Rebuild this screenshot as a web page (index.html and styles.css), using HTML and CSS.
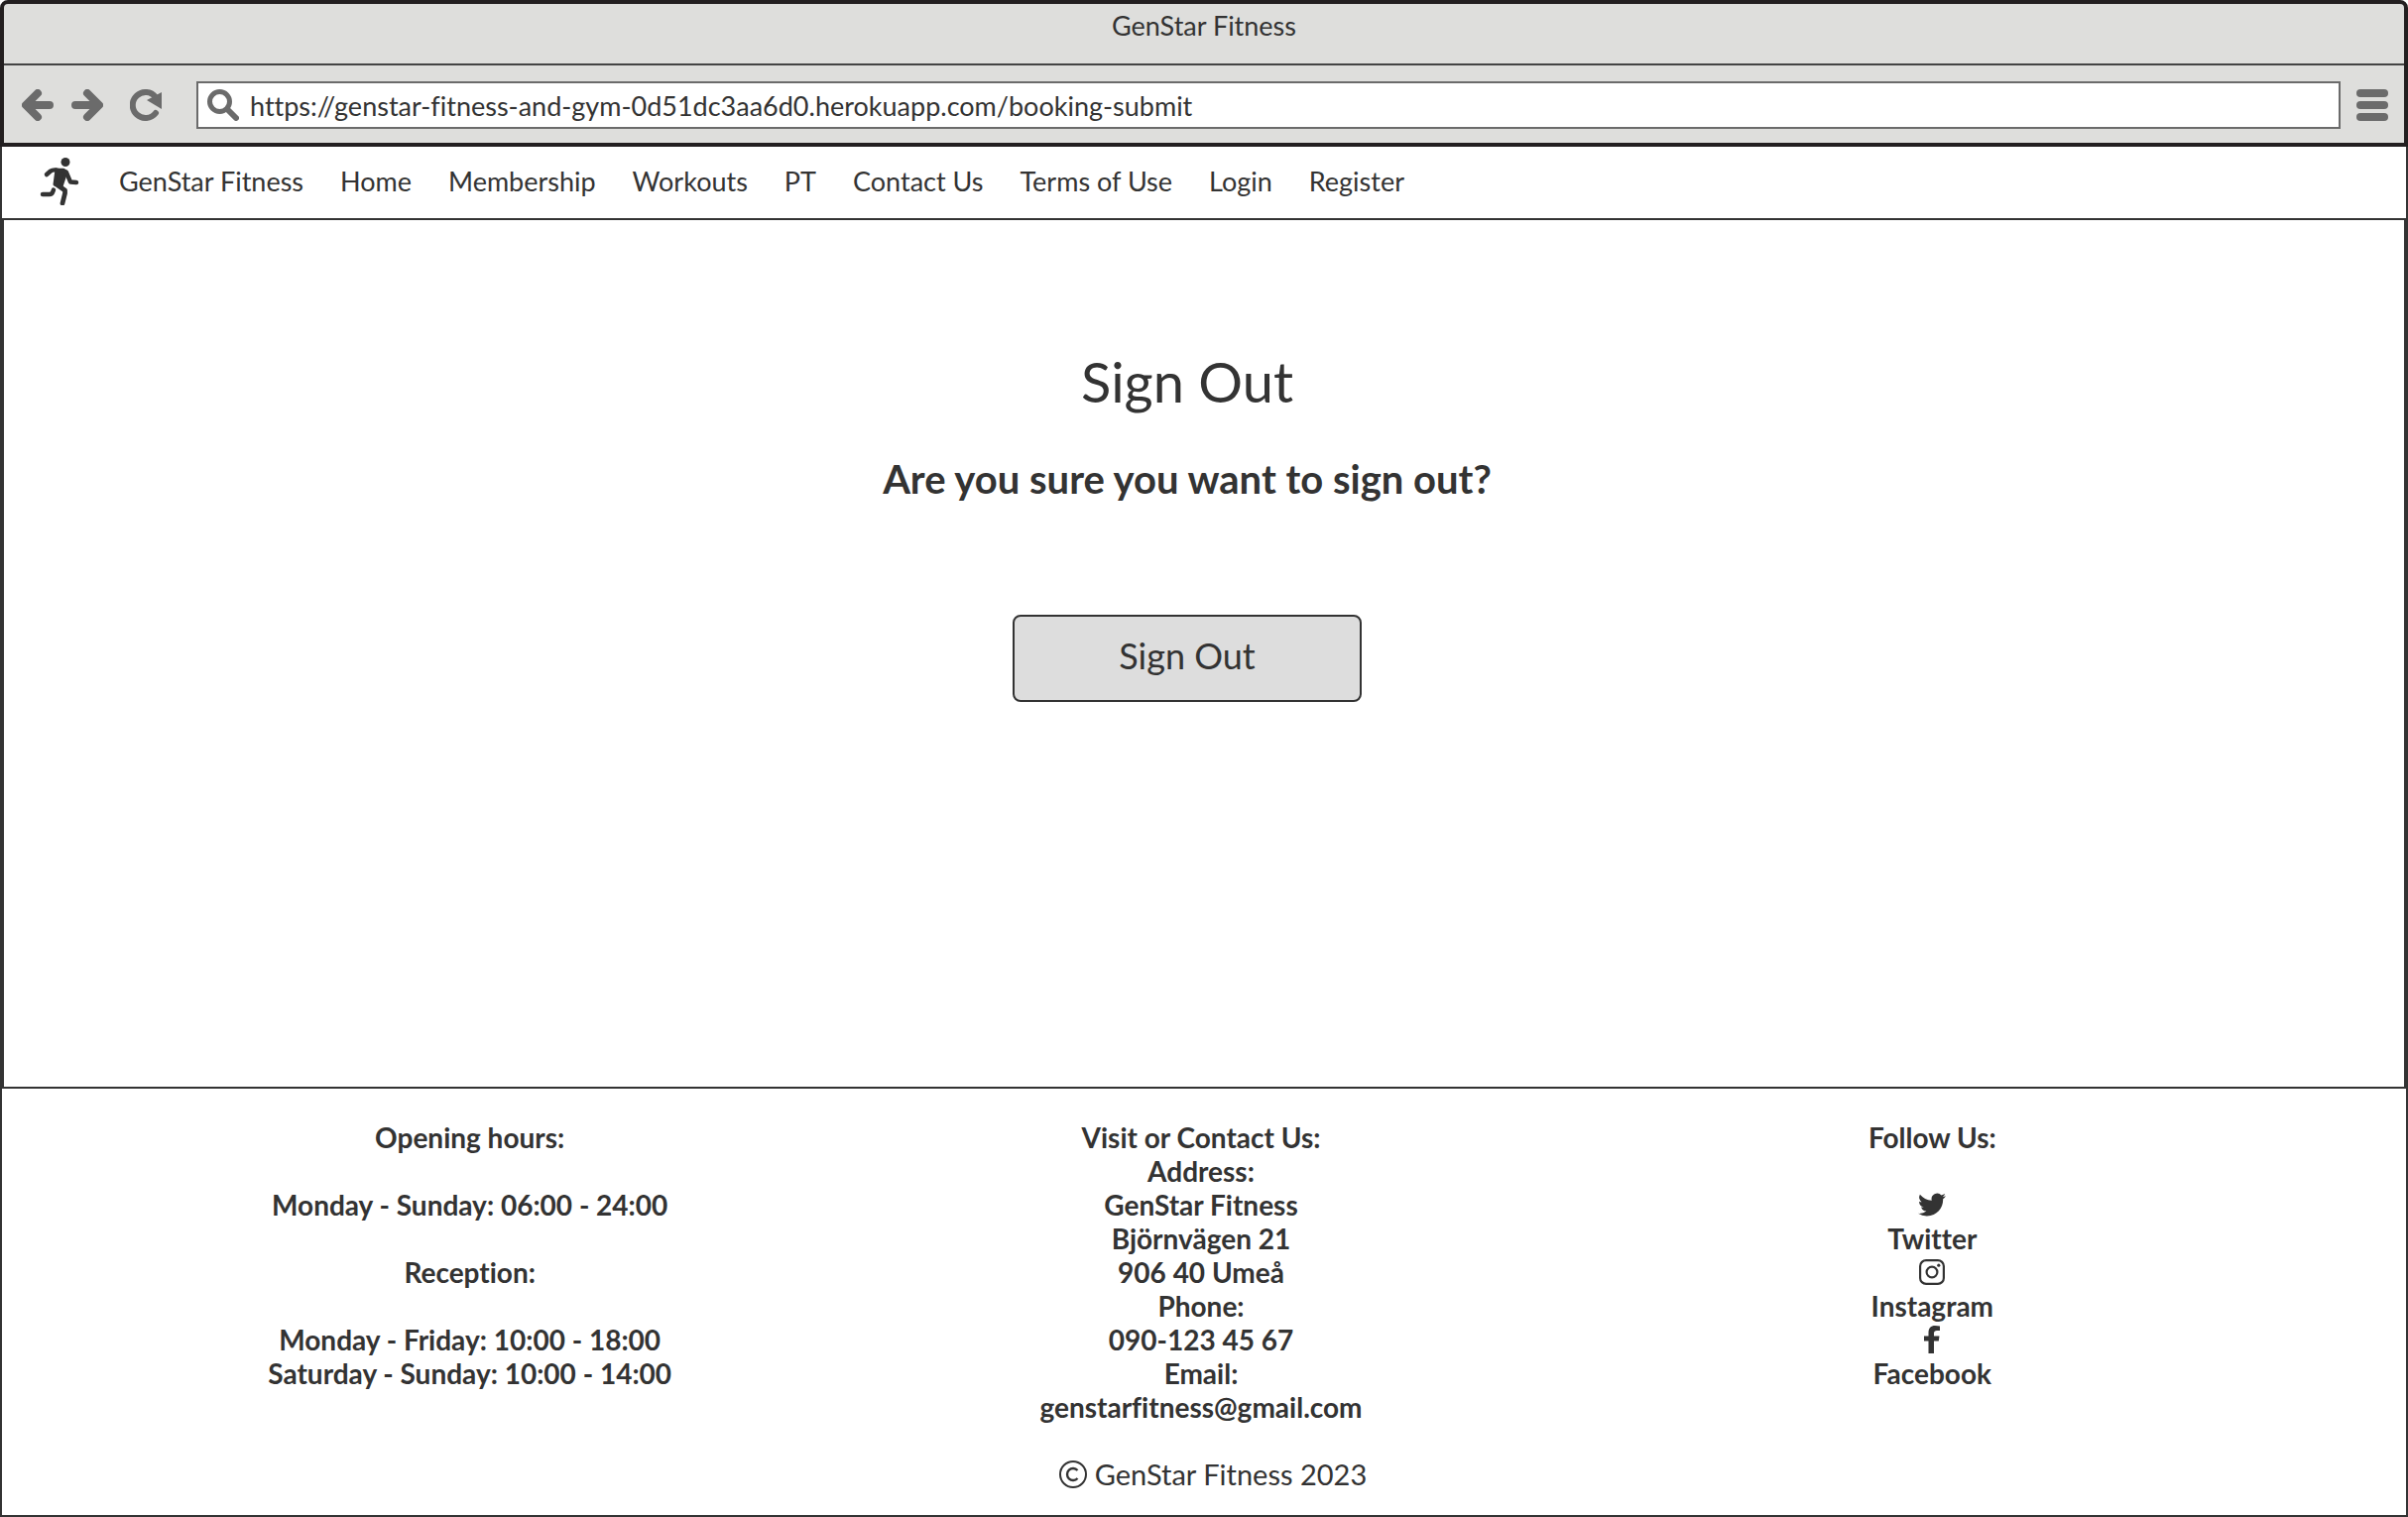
FILE: index.html
```html
<!DOCTYPE html>
<html lang="en">
<head>
<meta charset="utf-8">
<meta name="viewport" content="width=device-width, initial-scale=1">
<title>GenStar Fitness</title>
<link rel="stylesheet" href="styles.css">
</head>
<body>
<div class="window">
  <header class="chrome">
    <div class="title-bar">GenStar Fitness</div>
    <div class="toolbar">
      <button class="tool" type="button" aria-label="Back">
        <svg viewBox="0 0 32 32" width="32" height="32" fill="none" stroke="currentColor" stroke-width="8" stroke-linecap="round" stroke-linejoin="round"><path d="M28 16H8M16 4L4 16L16 28"/></svg>
      </button>
      <button class="tool" type="button" aria-label="Forward">
        <svg viewBox="0 0 32 32" width="32" height="32" fill="none" stroke="currentColor" stroke-width="8" stroke-linecap="round" stroke-linejoin="round"><path d="M4 16H24M16 4L28 16L16 28"/></svg>
      </button>
      <button class="tool tool-reload" type="button" aria-label="Reload">
        <svg viewBox="0 0 32 32" width="32" height="32"><path d="M26 24A13 13 0 1 1 26 8" fill="none" stroke="currentColor" stroke-width="6" stroke-linecap="round"/><path d="M32 3V20L17 11Z" fill="currentColor"/></svg>
      </button>
      <label class="address">
        <svg class="address-icon" viewBox="0 0 32 32" width="32" height="32" fill="none" stroke="currentColor" stroke-linecap="round" aria-hidden="true"><circle cx="12.500" cy="12.500" r="10" stroke-width="5"/><path d="M21 21L29 29" stroke-width="6"/></svg>
        <input class="address-input" type="text" aria-label="Address" value="https://genstar-fitness-and-gym-0d51dc3aa6d0.herokuapp.com/booking-submit">
      </label>
      <button class="tool" type="button" aria-label="Menu">
        <svg viewBox="0 0 32 32" width="32" height="32" fill="currentColor"><rect width="32" height="8" rx="4"/><rect y="12" width="32" height="8" rx="4"/><rect y="24" width="32" height="8" rx="4"/></svg>
      </button>
    </div>
  </header>

  <nav class="site-nav">
    <svg class="logo" viewBox="0 0 40 48" width="40" height="48" aria-hidden="true" fill="none" stroke="currentColor" stroke-linecap="round" stroke-linejoin="round"><circle cx="26" cy="4.500" r="4.500" fill="currentColor" stroke="none"/><path d="M7 17L11 13.500Q13 12 17 12.500L24 13L27 15L31 24.500L37 25" stroke-width="4.500"/><path d="M17 12L27 14L22 29L15 27Z" fill="currentColor" stroke-width="3"/><path d="M17 27L25.500 33L25.500 36L23 46" stroke-width="4.800"/><path d="M3 37H10Q12 37 13 35L14 32.500" stroke-width="4.500"/></svg>
    <ul class="nav-links">
      <li><a href="#">GenStar Fitness</a></li>
      <li><a href="#">Home</a></li>
      <li><a href="#">Membership</a></li>
      <li><a href="#">Workouts</a></li>
      <li><a href="#">PT</a></li>
      <li><a href="#">Contact Us</a></li>
      <li><a href="#">Terms of Use</a></li>
      <li><a href="#">Login</a></li>
      <li><a href="#">Register</a></li>
    </ul>
  </nav>

  <main class="sign-out">
    <h1 class="sign-out-title">Sign Out</h1>
    <p class="sign-out-question">Are you sure you want to sign out?</p>
    <button class="sign-out-button" type="submit">Sign Out</button>
  </main>

  <footer class="footer">
    <div class="footer-columns">
      <section>
        <h2>Opening hours:</h2>
        <p class="spaced">Monday - Sunday: 06:00 - 24:00</p>
        <h2 class="spaced">Reception:</h2>
        <p class="spaced">Monday - Friday: 10:00 - 18:00</p>
        <p>Saturday - Sunday: 10:00 - 14:00</p>
      </section>
      <section>
        <h2>Visit or Contact Us:</h2>
        <p>Address:</p>
        <p>GenStar Fitness</p>
        <p>Björnvägen 21</p>
        <p>906 40 Umeå</p>
        <p>Phone:</p>
        <p>090-123 45 67</p>
        <p>Email:</p>
        <p><a href="mailto:genstarfitness@gmail.com">genstarfitness@gmail.com</a></p>
      </section>
      <section>
        <h2>Follow Us:</h2>
        <a class="social spaced" href="#">
          <svg viewBox="0 0 24 24" width="28" height="28" fill="currentColor" aria-hidden="true"><path d="M23.950 4.570a10 10 0 0 1-2.820.770 4.960 4.960 0 0 0 2.160-2.720c-.950.550-2 .950-3.130 1.180a4.920 4.920 0 0 0-8.380 4.480C7.690 8.090 4.070 6.130 1.640 3.160a4.900 4.900 0 0 0 1.520 6.570 4.900 4.900 0 0 1-2.230-.610v.060a4.920 4.920 0 0 0 3.950 4.830 5 5 0 0 1-2.210.080 4.940 4.940 0 0 0 4.600 3.420A9.870 9.870 0 0 1 0 19.540a13.990 13.990 0 0 0 7.550 2.210c9.140 0 14.300-7.720 14.020-14.600a10 10 0 0 0 2.380-2.580z"/></svg>
          <span>Twitter</span>
        </a>
        <a class="social" href="#">
          <svg viewBox="0 0 26 26" width="26" height="26" fill="none" stroke="currentColor" stroke-width="2.200" aria-hidden="true"><rect x="1.100" y="1.100" width="23.800" height="23.800" rx="6"/><circle cx="13" cy="13" r="5.400"/><circle cx="19.800" cy="6.200" r="1.600" fill="currentColor" stroke="none"/></svg>
          <span>Instagram</span>
        </a>
        <a class="social" href="#">
          <svg viewBox="0 0 16 28" width="16" height="28" fill="currentColor" aria-hidden="true"><path d="M4.500 28V15.500H0V10.500H4.500V7C4.500 2.500 7 0 11 0Q14 0 16 .500V5H13Q10 5 10 7.500V10.500H15.500L14.800 15.500H10V28Z"/></svg>
          <span>Facebook</span>
        </a>
      </section>
    </div>
    <p class="copyright">
      <svg viewBox="0 0 28 28" width="28" height="28" fill="none" stroke="currentColor" aria-hidden="true"><circle cx="14" cy="14" r="13" stroke-width="2"/><path d="M18.500 10A6 6 0 1 0 18.500 18" stroke-width="2.400"/></svg>
      <span>GenStar Fitness 2023</span>
    </p>
  </footer>
</div>
</body>
</html>
```
FILE: styles.css
```css
* { box-sizing: border-box; }

body {
  margin: 0;
  background: #fff;
  color: #333;
  font-family: Lato, "Noto Sans", sans-serif;
  font-size: 27px;
  font-variant-ligatures: none;
  line-height: 34px;
}

h1, h2, p, ul { margin: 0; padding: 0; font-size: inherit; font-weight: inherit; }
a { color: inherit; text-decoration: none; }
svg { display: block; flex: none; }
button, input {
  font-family: inherit;
  font-size: inherit;
  font-variant-ligatures: none;
  color: inherit;
}

.window {
  display: flex;
  flex-direction: column;
  min-height: 100vh;
}

/* Browser chrome */
.chrome {
  background: #dededc;
  border: 4px solid #231f20;
  border-radius: 8px 8px 0 0;
}
.title-bar {
  padding: 5px 0 21px;
  border-bottom: 2px solid #444;
  text-align: center;
}
.toolbar {
  display: flex;
  align-items: center;
  gap: 16px;
  padding: 16px 16px 14px 18px;
}
.tool {
  padding: 0;
  border: 0;
  background: none;
  color: #6b6b6b;
}
.tool + .tool { margin-left: 2px; }
.tool.tool-reload { margin: 0 19px 0 11px; }
.address {
  flex: 1;
  display: flex;
  align-items: center;
  gap: 11px;
  height: 48px;
  padding: 0 10px 0 9px;
  background: #fff;
  border: 2px solid #6b6b6b;
}
.address-icon { color: #6b6b6b; }
.address-input {
  flex: 1;
  min-width: 0;
  padding: 0;
  border: 0;
  outline: 0;
  background: none;
}

/* Site navigation */
.site-nav {
  display: flex;
  align-items: center;
  gap: 40px;
  padding: 18px 38px 20px;
  border: solid #333;
  border-width: 0 2px 2px;
}
.logo { margin: -7px 0; }
.nav-links {
  display: flex;
  flex-wrap: wrap;
  gap: 0 37px;
  list-style: none;
}

/* Sign-out form */
.sign-out {
  flex: 1;
  display: flex;
  flex-direction: column;
  align-items: center;
  padding: 129px 34px 64px 0;
  border: solid #333;
  border-width: 0 4px;
}
.sign-out-title {
  font-size: 56px;
  line-height: 68px;
}
.sign-out-question {
  margin: 40px 0 113px;
  font-size: 40px;
  font-weight: 700;
  line-height: 48px;
}
.sign-out-button {
  padding: 17px 105px 23px;
  background: #ddd;
  border: 2px solid #333;
  border-radius: 8px;
  font-size: 36px;
  line-height: 44px;
}

/* Footer */
.footer {
  padding: 32px 109px 24px 103px;
  border: 2px solid #333;
  font-size: 28px;
}
.footer-columns {
  display: grid;
  grid-template-columns: repeat(3, 1fr);
  font-weight: 700;
  text-align: center;
}
.spaced { margin-top: 34px; }
.social {
  display: grid;
  grid-template-rows: 34px 34px;
  place-items: center;
}
.copyright {
  display: flex;
  align-items: center;
  justify-content: center;
  gap: 8px;
  margin-top: 34px;
  padding-left: 24px;
  font-size: 29px;
}
```
